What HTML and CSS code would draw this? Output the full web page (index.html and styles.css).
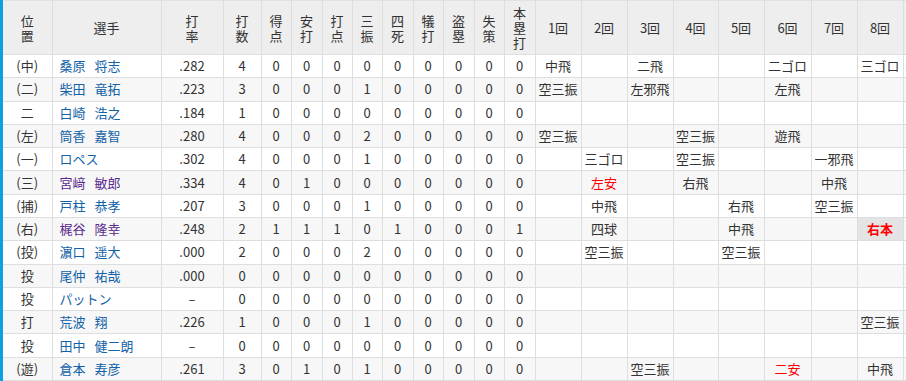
FILE: index.html
```html
<!DOCTYPE html>
<html lang="ja">
<head>
<meta charset="utf-8">
<title>打撃成績</title>
<link rel="stylesheet" href="styles.css">
</head>
<body>
<div class="wrap">
<table class="score">
<colgroup>
<col class="c-pos"><col class="c-name"><col class="c-avg"><col class="c-ab">
<col class="c-s"><col class="c-s1"><col class="c-s"><col class="c-s"><col class="c-s1"><col class="c-s"><col class="c-s1"><col class="c-s"><col class="c-s1">
<col class="c-inn"><col class="c-inn"><col class="c-inn"><col class="c-inn4"><col class="c-inn"><col class="c-inn6"><col class="c-inn"><col class="c-inn"><col class="c-inn">
</colgroup>
<thead>
<tr>
<th>位<br>置</th><th>選手</th><th>打<br>率</th><th>打<br>数</th><th>得<br>点</th><th>安<br>打</th><th>打<br>点</th><th>三<br>振</th><th>四<br>死</th><th>犠<br>打</th><th>盗<br>塁</th><th>失<br>策</th><th>本<br>塁<br>打</th>
<th>1回</th><th>2回</th><th>3回</th><th>4回</th><th>5回</th><th>6回</th><th>7回</th><th>8回</th><th>9回</th>
</tr>
</thead>
<tbody>
<tr><td>(中)</td><td class="name"><a href="#">桑原 将志</a></td><td>.282</td><td>4</td><td>0</td><td>0</td><td>0</td><td>0</td><td>0</td><td>0</td><td>0</td><td>0</td><td>0</td>
<td>中飛</td><td></td><td>二飛</td><td></td><td></td><td>二ゴロ</td><td></td><td>三ゴロ</td><td></td></tr>
<tr><td>(二)</td><td class="name"><a href="#">柴田 竜拓</a></td><td>.223</td><td>3</td><td>0</td><td>0</td><td>0</td><td>1</td><td>0</td><td>0</td><td>0</td><td>0</td><td>0</td>
<td>空三振</td><td></td><td>左邪飛</td><td></td><td></td><td>左飛</td><td></td><td></td><td></td></tr>
<tr><td>二</td><td class="name"><a href="#">白崎 浩之</a></td><td>.184</td><td>1</td><td>0</td><td>0</td><td>0</td><td>0</td><td>0</td><td>0</td><td>0</td><td>0</td><td>0</td>
<td></td><td></td><td></td><td></td><td></td><td></td><td></td><td></td><td></td></tr>
<tr><td>(左)</td><td class="name"><a href="#">筒香 嘉智</a></td><td>.280</td><td>4</td><td>0</td><td>0</td><td>0</td><td>2</td><td>0</td><td>0</td><td>0</td><td>0</td><td>0</td>
<td>空三振</td><td></td><td></td><td>空三振</td><td></td><td>遊飛</td><td></td><td></td><td></td></tr>
<tr><td>(一)</td><td class="name"><a href="#">ロペス</a></td><td>.302</td><td>4</td><td>0</td><td>0</td><td>0</td><td>1</td><td>0</td><td>0</td><td>0</td><td>0</td><td>0</td>
<td></td><td>三ゴロ</td><td></td><td>空三振</td><td></td><td></td><td>一邪飛</td><td></td><td></td></tr>
<tr><td>(三)</td><td class="name"><a href="#" class="visited">宮﨑 敏郎</a></td><td>.334</td><td>4</td><td>0</td><td>1</td><td>0</td><td>0</td><td>0</td><td>0</td><td>0</td><td>0</td><td>0</td>
<td></td><td class="hit">左安</td><td></td><td>右飛</td><td></td><td></td><td>中飛</td><td></td><td></td></tr>
<tr><td>(捕)</td><td class="name"><a href="#">戸柱 恭孝</a></td><td>.207</td><td>3</td><td>0</td><td>0</td><td>0</td><td>1</td><td>0</td><td>0</td><td>0</td><td>0</td><td>0</td>
<td></td><td>中飛</td><td></td><td></td><td>右飛</td><td></td><td>空三振</td><td></td><td></td></tr>
<tr><td>(右)</td><td class="name"><a href="#" class="visited">梶谷 隆幸</a></td><td>.248</td><td>2</td><td>1</td><td>1</td><td>1</td><td>0</td><td>1</td><td>0</td><td>0</td><td>0</td><td>1</td>
<td></td><td>四球</td><td></td><td></td><td>中飛</td><td></td><td></td><td class="hr">右本</td><td></td></tr>
<tr><td>(投)</td><td class="name"><a href="#">濵口 遥大</a></td><td>.000</td><td>2</td><td>0</td><td>0</td><td>0</td><td>2</td><td>0</td><td>0</td><td>0</td><td>0</td><td>0</td>
<td></td><td>空三振</td><td></td><td></td><td>空三振</td><td></td><td></td><td></td><td></td></tr>
<tr><td>投</td><td class="name"><a href="#">尾仲 祐哉</a></td><td>.000</td><td>0</td><td>0</td><td>0</td><td>0</td><td>0</td><td>0</td><td>0</td><td>0</td><td>0</td><td>0</td>
<td></td><td></td><td></td><td></td><td></td><td></td><td></td><td></td><td></td></tr>
<tr><td>投</td><td class="name"><a href="#">パットン</a></td><td>–</td><td>0</td><td>0</td><td>0</td><td>0</td><td>0</td><td>0</td><td>0</td><td>0</td><td>0</td><td>0</td>
<td></td><td></td><td></td><td></td><td></td><td></td><td></td><td></td><td></td></tr>
<tr><td>打</td><td class="name"><a href="#">荒波 翔</a></td><td>.226</td><td>1</td><td>0</td><td>0</td><td>0</td><td>1</td><td>0</td><td>0</td><td>0</td><td>0</td><td>0</td>
<td></td><td></td><td></td><td></td><td></td><td></td><td></td><td>空三振</td><td></td></tr>
<tr><td>投</td><td class="name"><a href="#">田中 健二朗</a></td><td>–</td><td>0</td><td>0</td><td>0</td><td>0</td><td>0</td><td>0</td><td>0</td><td>0</td><td>0</td><td>0</td>
<td></td><td></td><td></td><td></td><td></td><td></td><td></td><td></td><td></td></tr>
<tr><td>(遊)</td><td class="name"><a href="#">倉本 寿彦</a></td><td>.261</td><td>3</td><td>0</td><td>1</td><td>0</td><td>1</td><td>0</td><td>0</td><td>0</td><td>0</td><td>0</td>
<td></td><td></td><td>空三振</td><td></td><td></td><td class="hit">二安</td><td></td><td>中飛</td><td></td></tr>
</tbody>
</table>
</div>
</body>
</html>
```
FILE: styles.css
```css
html, body {
  margin: 0;
  padding: 0;
  background: #fff;
}

body {
  font-family: "Noto Sans CJK JP", "Noto Sans", sans-serif;
  font-size: 13px;
  color: #333;
}

.wrap {
  width: 903px;
  border-left: 3px solid #0ea0e2;
  overflow: hidden;
}

.score {
  border-collapse: collapse;
  table-layout: fixed;
  width: 946px;
}

.c-pos { width: 49px; }
.c-name { width: 109px; }
.c-avg { width: 62px; }
.c-ab { width: 38px; }
.c-s { width: 30px; }
.c-s1 { width: 31px; }
.c-inn { width: 46px; }
.c-inn4 { width: 45px; }
.c-inn6 { width: 47px; }

.score th,
.score td {
  border: 1px solid #dedede;
  padding: 0 2px;
  text-align: center;
  vertical-align: middle;
  white-space: nowrap;
  overflow: hidden;
}

.score th {
  background: #eeeeee;
  font-weight: normal;
  line-height: 15px;
  height: 53px;
  border-top-color: #e2e2e2;
}

.score td {
  line-height: 16px;
}

.score tbody tr {
  height: 23.29px;
  background: #fff;
}

.score tbody tr:nth-child(even) {
  background: #f7f7f7;
}

.score td.name {
  text-align: left;
  padding-left: 7px;
}

.name a {
  color: #1262a8;
  text-decoration: none;
  word-spacing: 6px;
}

.name a.visited {
  color: #5a2b8e;
}

.score td.hit {
  color: #f00;
}

.score td.hr {
  color: #f00;
  font-weight: bold;
  background: #e4e4e4;
}

.score th:first-child,
.score td:first-child {
  border-left: 0;
}
```
